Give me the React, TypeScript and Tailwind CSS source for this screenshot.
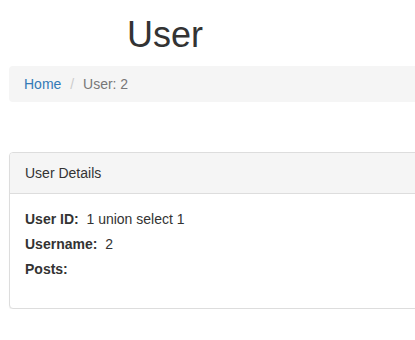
export default function App() {
  const rows = [
    { label: 'User ID:', value: '1 union select 1' },
    { label: 'Username:', value: '2' },
    { label: 'Posts:', value: '' },
  ];

  return (
    <div className="w-full overflow-hidden bg-white text-[14px] leading-[20px] text-[#333] font-['Liberation_Sans',Arial,sans-serif]">
      <div className="ml-[9px] w-[640px]">
        <h1 className="mt-[15px] mb-[11px] pl-[118px] text-[36px] leading-[40px] font-normal">User</h1>

        {/* breadcrumb */}
        <ol className="rounded-[4px] bg-[#f5f5f5] px-[15px] py-[8px]">
          <li className="inline-block">
            <a href="#" className="text-[#337ab7]">Home</a>
          </li>{' '}
          <li className="inline-block text-[#777]">
            <span className="px-[5px] text-[#ccc]">/{'\u00a0'}</span>User: 2
          </li>
        </ol>

        {/* panel */}
        <div className="mt-[50px] rounded-[4px] border border-[#ddd] bg-white shadow-[0_1px_1px_rgba(0,0,0,0.05)]">
          <div className="rounded-t-[3px] border-b border-[#ddd] bg-[#f5f5f5] px-[15px] py-[10px]">
            User Details
          </div>
          <div className="px-[15px] pt-[15px] pb-[29px]">
            {rows.map((r) => (
              <div key={r.label} className="mb-[5px] last:mb-0">
                <span className="font-bold">{r.label}</span>
                {r.value && <span>{'\u00a0 '}{r.value}</span>}
              </div>
            ))}
          </div>
        </div>
      </div>
    </div>
  );
}
